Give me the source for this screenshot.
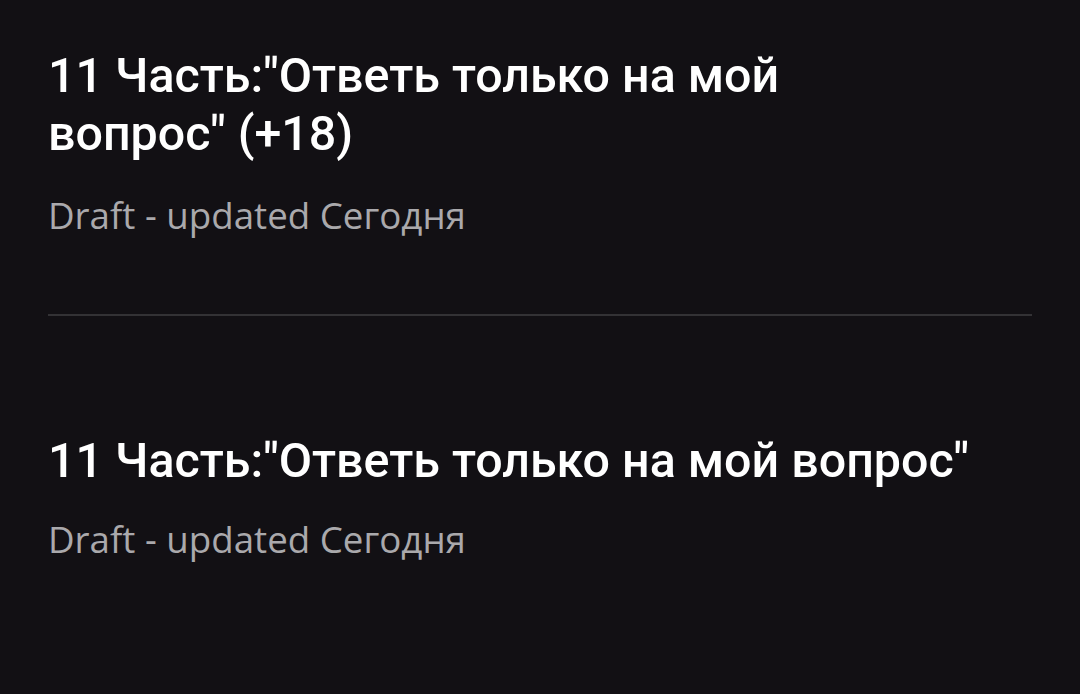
export default function App() {
  return (
    <div className="w-[1080px] h-[694px] bg-[#121014] overflow-hidden">
      <div className="px-[48px]">
        <div className="pt-[47px] pb-[74px]">
          <div className="max-w-[820px] text-white text-[48.4px] leading-[58px] font-medium" style={{ fontFamily: "Roboto, sans-serif" }}>
            11 Часть:"Ответь только на мой вопрос" (+18)
          </div>
          <div className="mt-[28px] text-[#aaa9ac] text-[36.7px] leading-[49px]" style={{ fontFamily: '"Open Sans", sans-serif' }}>
            Draft - updated Сегодня
          </div>
        </div>
        <div className="h-[2px] bg-[#333235]" />
        <div className="pt-[116px]">
          <div className="text-white text-[48.4px] leading-[58px] font-medium" style={{ fontFamily: "Roboto, sans-serif" }}>
            11 Часть:"Ответь только на мой вопрос"
          </div>
          <div className="mt-[25px] text-[#aaa9ac] text-[36.7px] leading-[49px]" style={{ fontFamily: '"Open Sans", sans-serif' }}>
            Draft - updated Сегодня
          </div>
        </div>
      </div>
    </div>
  );
}
